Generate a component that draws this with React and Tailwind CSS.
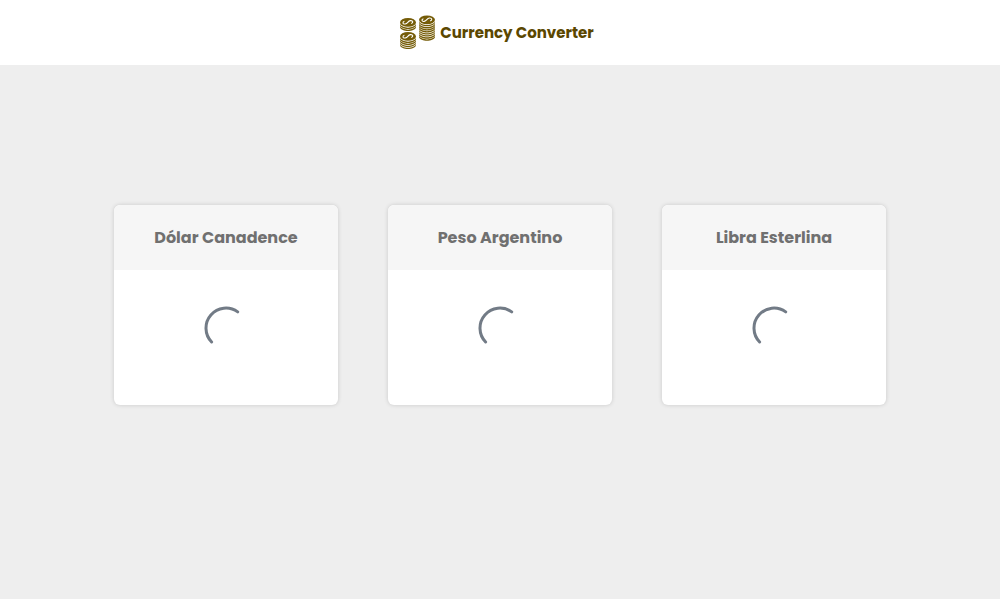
const currencies = ["Dólar Canadence", "Peso Argentino", "Libra Esterlina"];

function Stack({ x, y, coins }) {
  return (
    <g transform={`translate(${x} ${y})`}>
      <ellipse cx="8" cy="4.4" rx="8" ry="4.4" fill="#755c08" />
      <path
        d="M4.4 3.3C2.2 4 2.6 6.4 5.2 6C8 5.6 7.6 3 10.4 2.6C13.2 2.4 13.6 4.8 11.2 5.5"
        fill="none"
        stroke="#fff"
        strokeWidth="1.1"
      />
      {Array.from({ length: coins }, (_, i) => (
        <path
          key={i}
          transform={`translate(0 ${i * 2.05})`}
          d="M0 5.8C1.4 10.9 14.6 10.9 16 5.8V7.2C14.6 12.2 1.4 12.2 0 7.2Z"
          fill="#755c08"
        />
      ))}
    </g>
  );
}

function CoinsLogo() {
  return (
    <svg className="h-[34px] w-9" viewBox="0 0 36 34" overflow="visible" aria-hidden="true">
      <Stack x={0} y={2} coins={2} />
      <Stack x={0} y={16} coins={4} />
      <Stack x={19} y={-0.6} coins={8} />
    </svg>
  );
}

function Spinner() {
  return (
    <svg
      className="size-11"
      viewBox="0 0 44 44"
      fill="none"
      role="img"
      aria-label="Carregando"
    >
      <path
        d="M33.7 5.9A20 20 0 0 0 7.6 36"
        stroke="#727b86"
        strokeWidth="3"
        strokeLinecap="round"
      />
    </svg>
  );
}

function CurrencyCard({ name }) {
  return (
    <article className="w-56 overflow-hidden rounded-md bg-white shadow-[0_0_4px_rgba(0,0,0,0.16)]">
      <header className="flex h-[65px] items-center justify-center bg-[#f6f6f6]">
        <h2 className="text-base font-bold text-[#707070]">{name}</h2>
      </header>
      <div className="flex h-[135px] justify-center pt-9">
        <Spinner />
      </div>
    </article>
  );
}

export default function App() {
  return (
    <div className="flex min-h-screen flex-col bg-[#eeeeee] font-[Poppins,Inter,sans-serif]">
      <header className="flex h-[65px] items-center justify-center gap-1 bg-white pr-1.5">
        <CoinsLogo />
        <h1 className="text-[15px] leading-6 font-bold text-[#5b4700]">Currency Converter</h1>
      </header>
      <main className="flex flex-wrap justify-center gap-[50px] px-6 pt-[140px] pb-10">
        {currencies.map((name) => (
          <CurrencyCard key={name} name={name} />
        ))}
      </main>
    </div>
  );
}
